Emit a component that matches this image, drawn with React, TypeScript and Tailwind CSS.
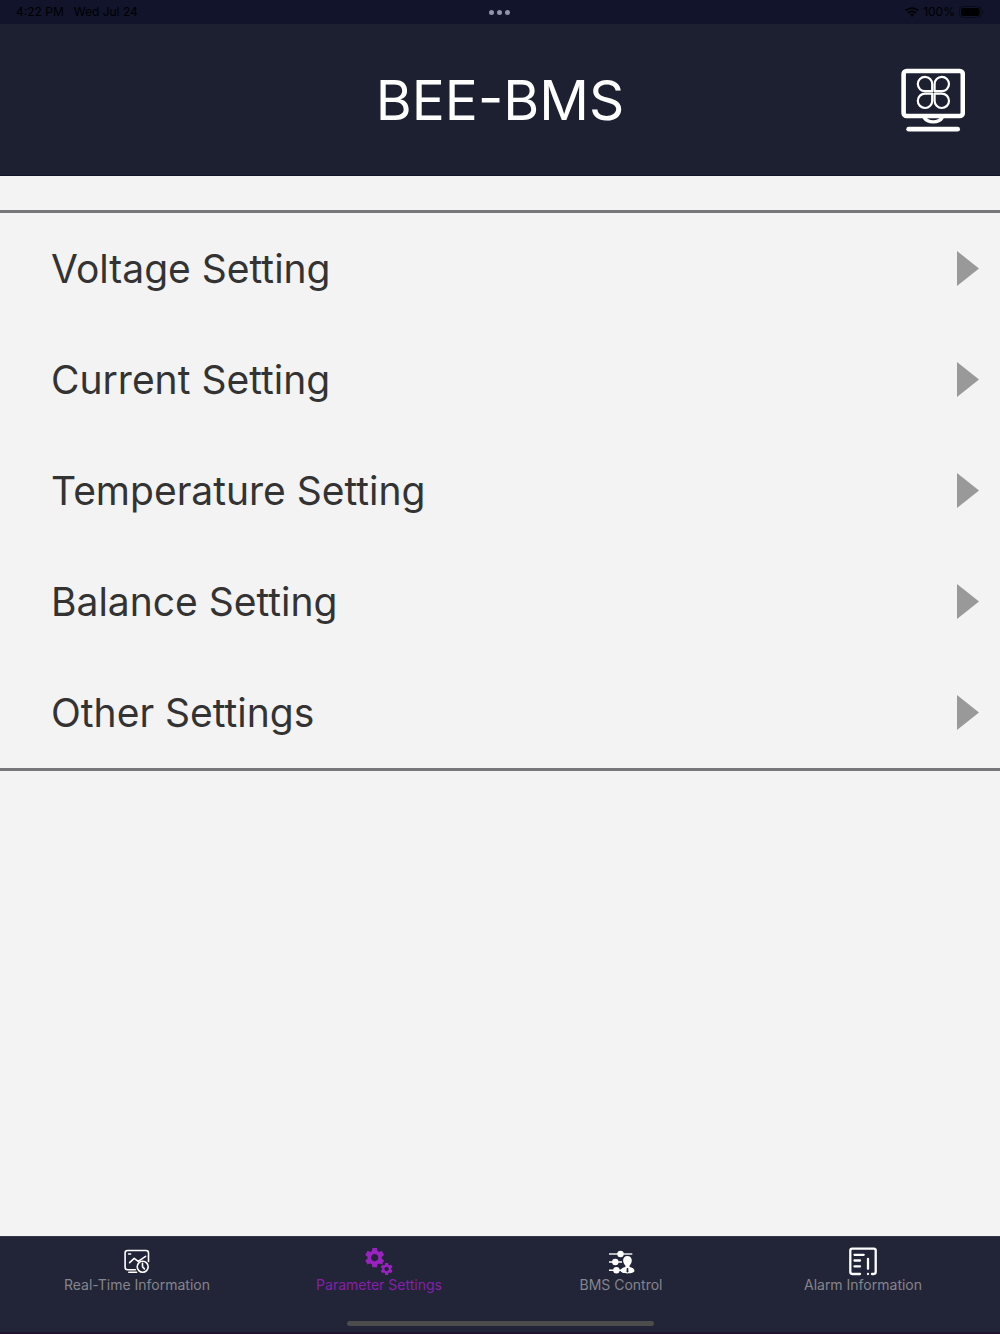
import { useState } from "react";
import type { ReactNode } from "react";

const SETTINGS = [
  "Voltage Setting",
  "Current Setting",
  "Temperature Setting",
  "Balance Setting",
  "Other Settings",
];

const TABS: { id: string; label: string; icon: ReactNode }[] = [
  { id: "realtime", label: "Real-Time Information", icon: <ChartClockIcon /> },
  { id: "params", label: "Parameter Settings", icon: <GearsIcon /> },
  { id: "control", label: "BMS Control", icon: <ControlIcon /> },
  { id: "alarm", label: "Alarm Information", icon: <AlarmIcon /> },
];

export default function App() {
  const [activeTab, setActiveTab] = useState("params");

  return (
    <div className="min-h-screen flex flex-col bg-[#f3f3f3] font-['Inter',sans-serif]">
      <StatusBar />

      {/* HEADER */}
      <header className="h-[152px] pt-px px-[35px] grid grid-cols-[1fr_auto_1fr] items-center bg-[#1d2030] border-b border-[#11142b]">
        <h1 className="col-start-2 text-[55px] leading-none text-white">BEE-BMS</h1>
        <button type="button" aria-label="Devices" className="justify-self-end">
          <MonitorIcon />
        </button>
      </header>

      {/* SETTINGS LIST */}
      <main className="flex-1 pt-[34px]">
        <ul className="border-y-3 border-[#77777a]">
          {SETTINGS.map((name) => (
            <li key={name}>
              <button
                type="button"
                className="w-full h-[111px] pl-[51px] pr-[21px] flex items-center justify-between text-left text-[39px] leading-none text-[#333333]"
              >
                {name}
                <svg width="22" height="35" viewBox="0 0 22 35" fill="#999999" aria-hidden="true">
                  <path d="M0 0L22 17.5L0 35Z" />
                </svg>
              </button>
            </li>
          ))}
        </ul>
      </main>

      {/* TAB BAR */}
      <footer className="bg-[#222438] border-t border-[#34364a] border-b-2 border-b-[#1e1432]">
        <nav className="px-4 pt-[10px] grid grid-cols-4">
          {TABS.map((tab) => (
            <button
              key={tab.id}
              type="button"
              onClick={() => setActiveTab(tab.id)}
              aria-current={activeTab === tab.id ? "page" : undefined}
              className="flex flex-col items-center"
            >
              <span className={activeTab === tab.id ? "text-[#9a22c0]" : "text-white"}>{tab.icon}</span>
              <span
                className={`text-[14px] leading-4 whitespace-nowrap ${
                  activeTab === tab.id ? "text-[#8521a8]" : "text-[#85858b]"
                }`}
              >
                {tab.label}
              </span>
            </button>
          ))}
        </nav>
        <div className="mt-7 mb-[6px] mx-auto w-[307px] h-[5px] rounded-full bg-[#4c4c4c]" />
      </footer>
    </div>
  );
}

function StatusBar() {
  return (
    <div className="h-6 px-4 grid grid-cols-3 items-center bg-[#11142b] text-[12px] leading-none text-black">
      <div className="flex gap-[10px]">
        <span>4:22 PM</span>
        <span>Wed Jul 24</span>
      </div>
      <div className="flex justify-center gap-[3px]">
        <span className="size-[5px] rounded-full bg-[#9294a8]" />
        <span className="size-[5px] rounded-full bg-[#9294a8]" />
        <span className="size-[5px] rounded-full bg-[#9294a8]" />
      </div>
      <div className="flex justify-end items-center gap-1">
        <svg width="14" height="10" viewBox="0 0 14 10" fill="none" stroke="black" strokeWidth="1.8" aria-hidden="true">
          <path d="M0.8 3.6A8.8 8.8 0 0 1 13.2 3.6" />
          <path d="M3.1 6A5.5 5.5 0 0 1 10.9 6" />
          <path d="M7 9.8L4.9 7.6A3 3 0 0 1 9.1 7.6Z" fill="black" stroke="none" />
        </svg>
        <span>100%</span>
        <svg width="25" height="12" viewBox="0 0 25 12" aria-hidden="true">
          <rect x="0.5" y="0.5" width="21.5" height="11" rx="3.4" fill="none" stroke="#0a0c1c" />
          <rect x="2" y="2" width="18.5" height="8" rx="2" fill="black" />
          <path d="M23.2 4.2Q24.4 4.8 24.4 6T23.2 7.8Z" fill="#0a0c1c" />
        </svg>
      </div>
    </div>
  );
}

function MonitorIcon() {
  return (
    <svg width="64" height="64" viewBox="0 0 64 64" fill="none" stroke="white" aria-hidden="true">
      <rect x="2.6" y="3" width="59.2" height="45" rx="3" strokeWidth="4.6" />
      {/* four-leaf clover */}
      <g strokeWidth="2.2" strokeLinejoin="round">
        <path d="M31.2 23.2H24.2A7.2 7.2 0 1 1 31.2 16.2Z" />
        <path d="M33.6 23.2H40.6A7.2 7.2 0 1 0 33.6 16.2Z" />
        <path d="M31.2 25.6H24.2A7.2 7.2 0 1 0 31.2 32.6Z" />
        <path d="M33.6 25.6H40.6A7.2 7.2 0 1 1 33.6 32.6Z" />
      </g>
      <path d="M23 49.5Q26 53.9 32.2 53.9T41.4 49.5" strokeWidth="3.4" />
      <path d="M7.7 61.2H56.6" strokeWidth="4.8" strokeLinecap="round" />
    </svg>
  );
}

function ChartClockIcon() {
  return (
    <svg width="30" height="30" viewBox="0 0 30 30" fill="none" stroke="currentColor" strokeWidth="1.6" strokeLinecap="round" strokeLinejoin="round" aria-hidden="true">
      <path d="M13.4 22.8H5.6Q3.1 22.8 3.1 20.3V6Q3.1 3.5 5.6 3.5H24Q26.5 3.5 26.5 6V14.4" />
      <path d="M6.6 7H8.6" />
      <path d="M7.6 15.6L12.2 11.4L16.2 14.4L23.6 9.4" />
      <path d="M6.8 25.2H14.6" />
      <circle cx="20.7" cy="19.7" r="5.5" />
      <path d="M20.5 16.4V19.8L22.4 21.9" />
    </svg>
  );
}

const GEAR =
  "M19.14 12.94c.04-.3.06-.61.06-.94 0-.32-.02-.64-.07-.94l2.03-1.58c.18-.14.23-.41.12-.61l-1.92-3.32c-.12-.22-.37-.29-.59-.22l-2.39.96c-.5-.38-1.03-.7-1.62-.94l-.36-2.54c-.04-.24-.24-.41-.48-.41h-3.84c-.24 0-.43.17-.47.41l-.36 2.54c-.59.24-1.13.57-1.62.94l-2.39-.96c-.22-.08-.47 0-.59.22L2.74 8.87c-.12.21-.08.47.12.61l2.03 1.58c-.05.3-.09.63-.09.94s.02.64.07.94l-2.03 1.58c-.18.14-.23.41-.12.61l1.92 3.32c.12.22.37.29.59.22l2.39-.96c.5.38 1.03.7 1.62.94l.36 2.54c.05.24.24.41.48.41h3.84c.24 0 .44-.17.47-.41l.36-2.54c.59-.24 1.13-.56 1.62-.94l2.39.96c.22.08.47 0 .59-.22l1.92-3.32c.12-.22.07-.47-.12-.61l-2.01-1.58zM12 15.6c-1.98 0-3.6-1.62-3.6-3.6s1.62-3.6 3.6-3.6 3.6 1.62 3.6 3.6-1.62 3.6-3.6 3.6z";

function GearsIcon() {
  return (
    <svg width="30" height="30" viewBox="0 0 30 30" fill="currentColor" aria-hidden="true">
      <path d={GEAR} transform="translate(-1.3 -1.3)" />
      <path d={GEAR} transform="translate(15.2 14.5) scale(0.62)" />
    </svg>
  );
}

function ControlIcon() {
  return (
    <svg width="30" height="30" viewBox="0 0 30 30" fill="currentColor" aria-hidden="true">
      <path d="M3 7H26.3" stroke="currentColor" strokeWidth="1.7" opacity="0.8" />
      <path d="M3 15H16M3 23.3H15" stroke="currentColor" strokeWidth="1.4" />
      <circle cx="14.5" cy="7" r="3.2" />
      <circle cx="9.3" cy="15" r="3.2" />
      <circle cx="10.4" cy="23.2" r="3.2" />
      <path d="M21.4 8.9C24.2 8.9 25.9 10.9 25.8 13.6C25.7 15.8 24.8 17.4 23.6 18.5V20.1C26.3 20.7 28.4 21.6 28.4 23.8C28.4 25.6 25.4 26.4 21.5 26.4S14.7 25.6 14.7 23.8C14.7 21.6 16.8 20.7 19.4 20.1V18.5C18.1 17.4 17.2 15.8 17.1 13.6C17 10.9 18.7 8.9 21.4 8.9Z" />
      <path d="M20.8 21H22.2L22.5 24.6L21.5 25.7L20.5 24.6Z" fill="#222438" />
    </svg>
  );
}

function AlarmIcon() {
  return (
    <svg width="30" height="30" viewBox="0 0 30 30" fill="none" stroke="currentColor" strokeWidth="2.3" strokeLinecap="round" strokeLinejoin="round" aria-hidden="true">
      <path d="M12 27H4.2Q2.3 27 2.3 25.1V3.6Q2.3 1.7 4.2 1.7H25.8Q27.7 1.7 27.7 3.6V25.1Q27.7 27 25.8 27H24" />
      <path d="M6.5 7.8H15.7M6.5 13.5H12M6.5 19.4H12" />
      <path d="M20 12V21.8M20 26.9V27" />
    </svg>
  );
}
